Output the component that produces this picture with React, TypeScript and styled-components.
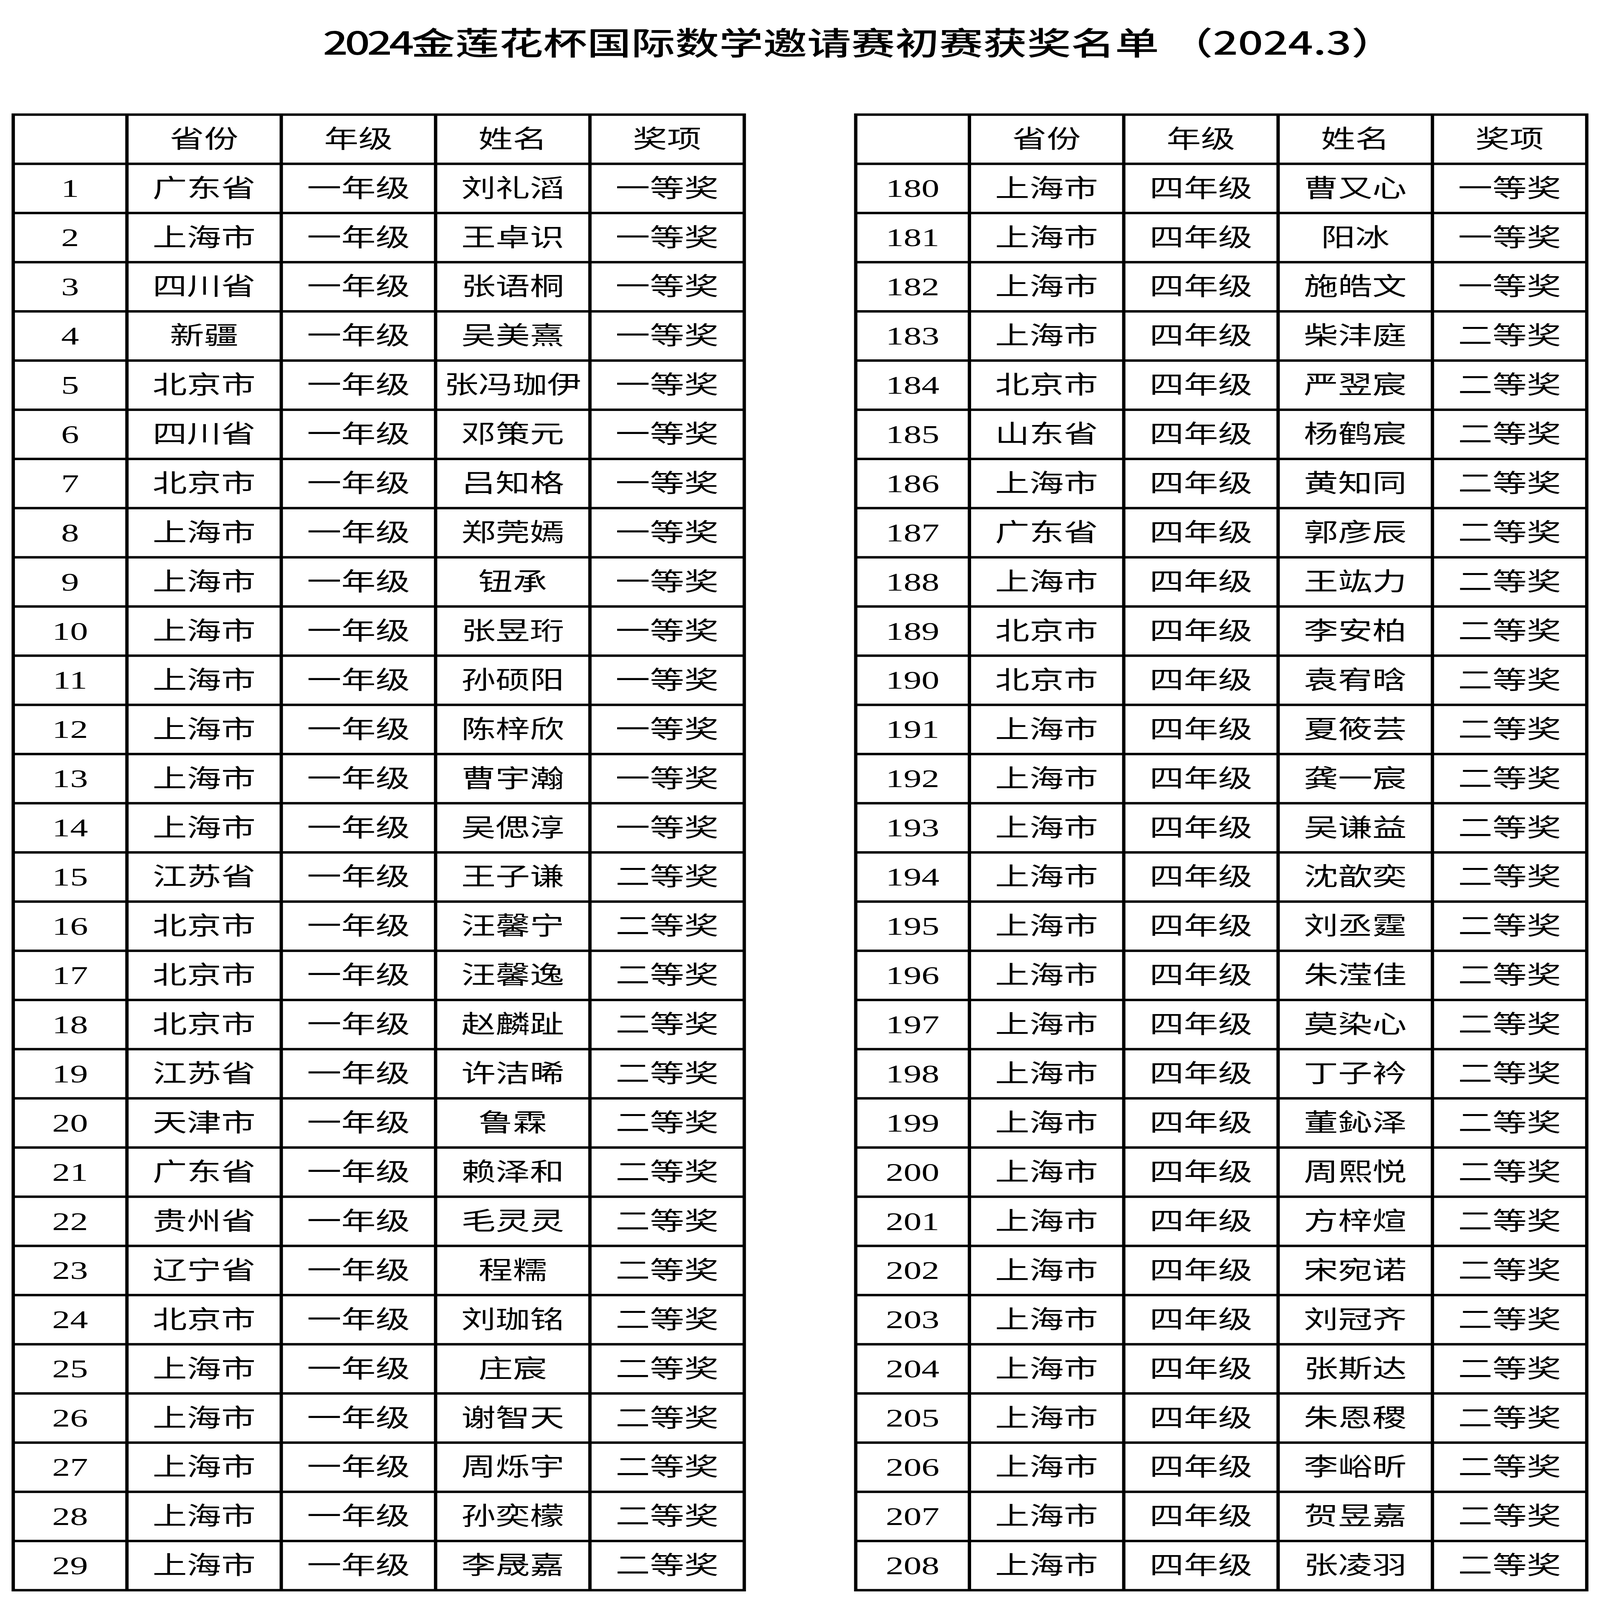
import React, { useEffect, useState } from "react";
import styled, { createGlobalStyle } from "styled-components";

const PAGE_W = 4292;
const PAGE_H = 5953;

const Global = createGlobalStyle`
  html, body { margin: 0; padding: 0; background: #ffffff; overflow: hidden; }
  body { font-family: "Liberation Serif", "Noto Sans CJK SC", serif; color: #000; }
`;

const Viewport = styled.div`
  width: 100vw;
  height: 100vh;
  overflow: hidden;
  background: #fff;
`;

const Page = styled.div`
  width: ${PAGE_W}px;
  height: ${PAGE_H}px;
  background: #fff;
  display: flex;
  flex-direction: column;
  transform-origin: 0 0;
`;

const Title = styled.h1`
  margin: 0;
  padding: 94px 0 0 866px;
  height: 422px;
  box-sizing: border-box;
  font-family: "Noto Sans CJK SC", sans-serif;
  font-weight: 500;
  font-size: 118px;
  line-height: 1;
  white-space: pre;
  color: #000;
`;

const Narrow = styled.span`
  letter-spacing: -8px;
`;

const Tables = styled.div`
  display: flex;
  gap: 290px;
  justify-content: center;
`;

const Grid = styled.div`
  display: grid;
  grid-template-columns: 296px repeat(4, 405px);
  grid-auto-rows: 174px;
  gap: 9px;
  padding: 9px;
  background: #000;
`;

const Cell = styled.div<{ $num?: boolean }>`
  background: #fff;
  display: flex;
  align-items: center;
  justify-content: center;
  font-family: ${(p) => (p.$num ? `"Liberation Serif", serif` : `"Liberation Serif", "Noto Sans CJK SC", serif`)};
  font-size: ${(p) => (p.$num ? "96px" : "92px")};
  font-weight: 400;
  line-height: 1;
  white-space: nowrap;
  color: #000;
`;

type Row = [string, string, string, string, string];

const left: Row[] = [
  ["1", "广东省", "一年级", "刘礼滔", "一等奖"],
  ["2", "上海市", "一年级", "王卓识", "一等奖"],
  ["3", "四川省", "一年级", "张语桐", "一等奖"],
  ["4", "新疆", "一年级", "吴美熹", "一等奖"],
  ["5", "北京市", "一年级", "张冯珈伊", "一等奖"],
  ["6", "四川省", "一年级", "邓策元", "一等奖"],
  ["7", "北京市", "一年级", "吕知格", "一等奖"],
  ["8", "上海市", "一年级", "郑莞嫣", "一等奖"],
  ["9", "上海市", "一年级", "钮承", "一等奖"],
  ["10", "上海市", "一年级", "张昱珩", "一等奖"],
  ["11", "上海市", "一年级", "孙硕阳", "一等奖"],
  ["12", "上海市", "一年级", "陈梓欣", "一等奖"],
  ["13", "上海市", "一年级", "曹宇瀚", "一等奖"],
  ["14", "上海市", "一年级", "吴偲淳", "一等奖"],
  ["15", "江苏省", "一年级", "王子谦", "二等奖"],
  ["16", "北京市", "一年级", "汪馨宁", "二等奖"],
  ["17", "北京市", "一年级", "汪馨逸", "二等奖"],
  ["18", "北京市", "一年级", "赵麟趾", "二等奖"],
  ["19", "江苏省", "一年级", "许洁晞", "二等奖"],
  ["20", "天津市", "一年级", "鲁霖", "二等奖"],
  ["21", "广东省", "一年级", "赖泽和", "二等奖"],
  ["22", "贵州省", "一年级", "毛灵灵", "二等奖"],
  ["23", "辽宁省", "一年级", "程糯", "二等奖"],
  ["24", "北京市", "一年级", "刘珈铭", "二等奖"],
  ["25", "上海市", "一年级", "庄宸", "二等奖"],
  ["26", "上海市", "一年级", "谢智天", "二等奖"],
  ["27", "上海市", "一年级", "周烁宇", "二等奖"],
  ["28", "上海市", "一年级", "孙奕檬", "二等奖"],
  ["29", "上海市", "一年级", "李晟嘉", "二等奖"],
];

const right: Row[] = [
  ["180", "上海市", "四年级", "曹又心", "一等奖"],
  ["181", "上海市", "四年级", "阳冰", "一等奖"],
  ["182", "上海市", "四年级", "施皓文", "一等奖"],
  ["183", "上海市", "四年级", "柴沣庭", "二等奖"],
  ["184", "北京市", "四年级", "严翌宸", "二等奖"],
  ["185", "山东省", "四年级", "杨鹤宸", "二等奖"],
  ["186", "上海市", "四年级", "黄知同", "二等奖"],
  ["187", "广东省", "四年级", "郭彦辰", "二等奖"],
  ["188", "上海市", "四年级", "王竑力", "二等奖"],
  ["189", "北京市", "四年级", "李安柏", "二等奖"],
  ["190", "北京市", "四年级", "袁宥晗", "二等奖"],
  ["191", "上海市", "四年级", "夏筱芸", "二等奖"],
  ["192", "上海市", "四年级", "龚一宸", "二等奖"],
  ["193", "上海市", "四年级", "吴谦益", "二等奖"],
  ["194", "上海市", "四年级", "沈歆奕", "二等奖"],
  ["195", "上海市", "四年级", "刘丞霆", "二等奖"],
  ["196", "上海市", "四年级", "朱滢佳", "二等奖"],
  ["197", "上海市", "四年级", "莫染心", "二等奖"],
  ["198", "上海市", "四年级", "丁子衿", "二等奖"],
  ["199", "上海市", "四年级", "董鈊泽", "二等奖"],
  ["200", "上海市", "四年级", "周熙悦", "二等奖"],
  ["201", "上海市", "四年级", "方梓煊", "二等奖"],
  ["202", "上海市", "四年级", "宋宛诺", "二等奖"],
  ["203", "上海市", "四年级", "刘冠齐", "二等奖"],
  ["204", "上海市", "四年级", "张斯达", "二等奖"],
  ["205", "上海市", "四年级", "朱恩稷", "二等奖"],
  ["206", "上海市", "四年级", "李峪昕", "二等奖"],
  ["207", "上海市", "四年级", "贺昱嘉", "二等奖"],
  ["208", "上海市", "四年级", "张凌羽", "二等奖"],
];

const header: Row = ["", "省份", "年级", "姓名", "奖项"];

function AwardTable({ rows }: { rows: Row[] }) {
  const all = [header, ...rows];
  return (
    <Grid>
      {all.map((r, i) =>
        r.map((c, j) => (
          <Cell key={`${i}-${j}`} $num={j === 0}>
            {c}
          </Cell>
        ))
      )}
    </Grid>
  );
}

function useFit() {
  const get = () => ({
    sx: typeof window !== "undefined" ? window.innerWidth / PAGE_W : 1,
    sy: typeof window !== "undefined" ? window.innerHeight / PAGE_H : 1,
  });
  const [s, setS] = useState(get);
  useEffect(() => {
    const on = () => setS(get());
    window.addEventListener("resize", on);
    return () => window.removeEventListener("resize", on);
  }, []);
  return s;
}

export default function App() {
  const { sx, sy } = useFit();
  return (
    <Viewport>
      <Global />
      <Page style={{ transform: `scale(${sx}, ${sy})` }}>
        <Title>
          <Narrow>2024</Narrow>
          {"金莲花杯国际数学邀请赛初赛获奖名单 （2024.3）"}
        </Title>
        <Tables>
          <AwardTable rows={left} />
          <AwardTable rows={right} />
        </Tables>
      </Page>
    </Viewport>
  );
}
